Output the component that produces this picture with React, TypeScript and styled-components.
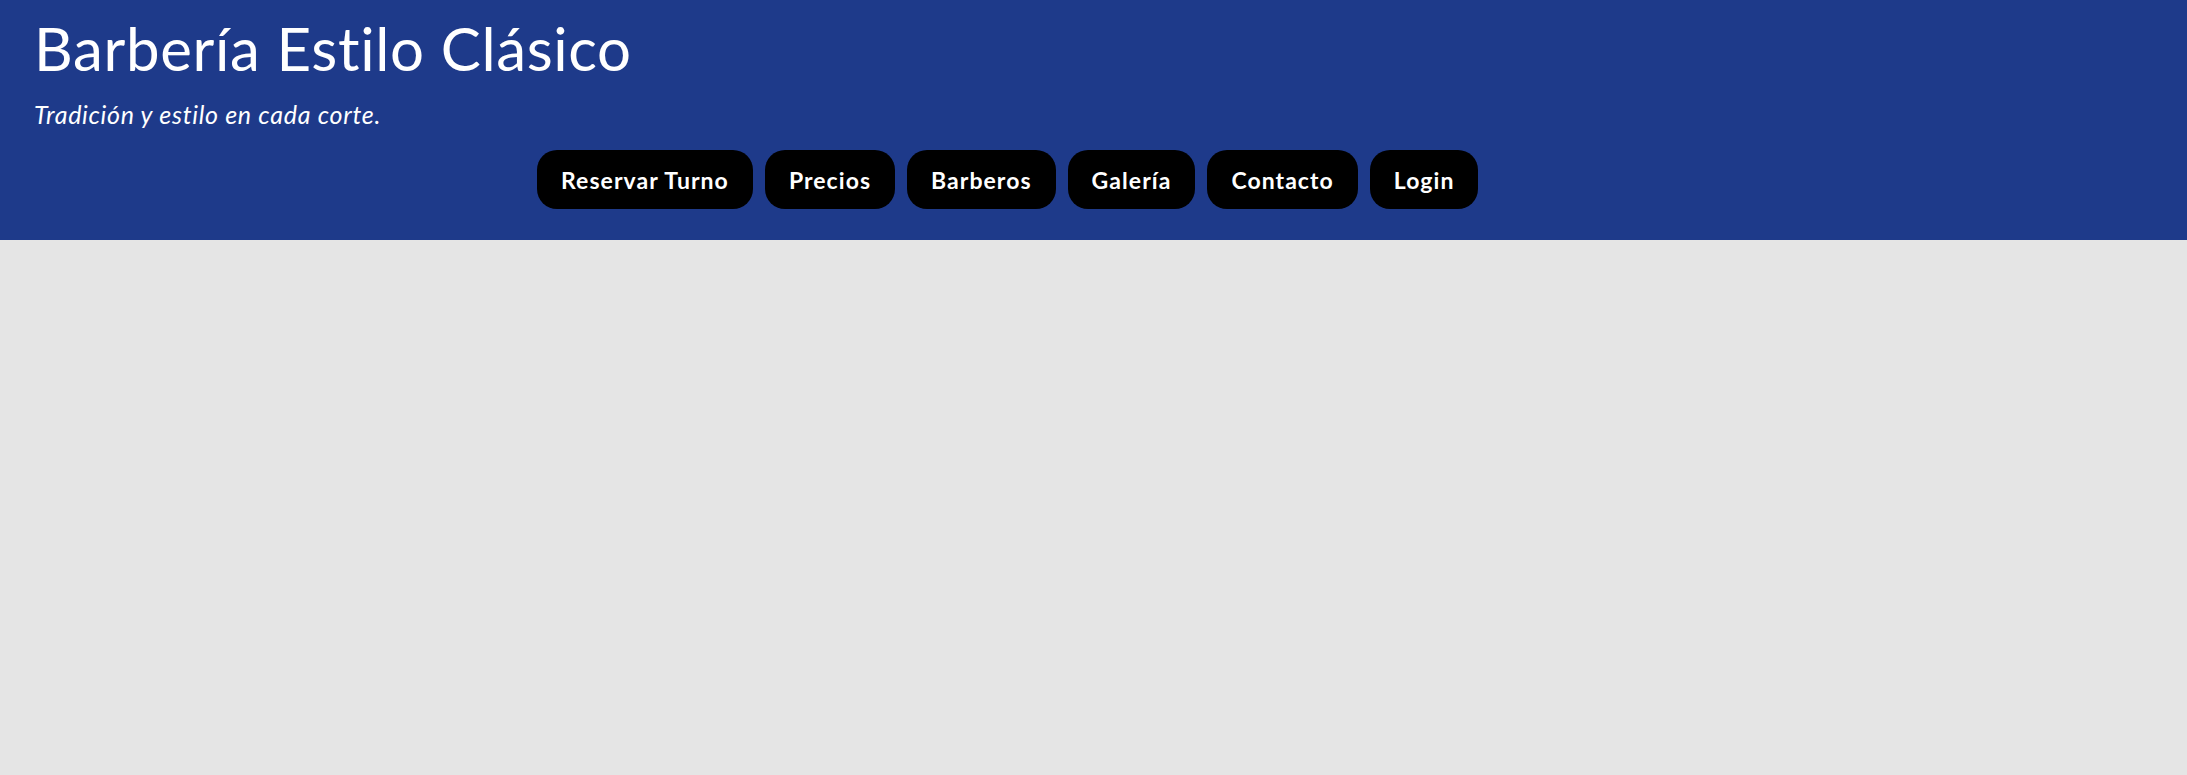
import React from "react";
import styled, { createGlobalStyle } from "styled-components";

const Global = createGlobalStyle`
  html, body { margin: 0; padding: 0; }
  body {
    background: #e5e5e5;
    font-family: "Lato", "Open Sans", sans-serif;
    min-height: 775px;
  }
`;

const Header = styled.header`
  background: #1e3a8a;
  color: #ffffff;
  padding: 0 24px 30px 34px;
  display: flex;
  flex-direction: column;
  height: 240px;
  box-sizing: border-box;
`;

const Title = styled.h1`
  margin: 0;
  padding-top: 12px;
  font-size: 60px;
  line-height: 72px;
  font-weight: 400;
  letter-spacing: 0.65px;
`;

const Tagline = styled.p`
  margin: 16px 0 0;
  font-size: 25px;
  line-height: 28px;
  font-style: italic;
  letter-spacing: 0.7px;
`;

const Nav = styled.nav`
  display: flex;
  gap: 12px;
  margin-top: 22px;
  padding-left: 503px;
`;

const NavButton = styled.a`
  display: flex;
  align-items: center;
  justify-content: center;
  height: 59px;
  padding: 0 24px;
  background: #000000;
  color: #ffffff;
  border-radius: 20px;
  font-size: 23px;
  font-weight: 700;
  letter-spacing: 1.05px;
  text-decoration: none;
  cursor: pointer;
`;

const items = ["Reservar Turno", "Precios", "Barberos", "Galería", "Contacto", "Login"];

export default function App() {
  return (
    <>
      <Global />
      <Header>
        <Title>Barbería Estilo Clásico</Title>
        <Tagline>Tradición y estilo en cada corte.</Tagline>
        <Nav>
          {items.map((t) => (
            <NavButton key={t}>{t}</NavButton>
          ))}
        </Nav>
      </Header>
    </>
  );
}
